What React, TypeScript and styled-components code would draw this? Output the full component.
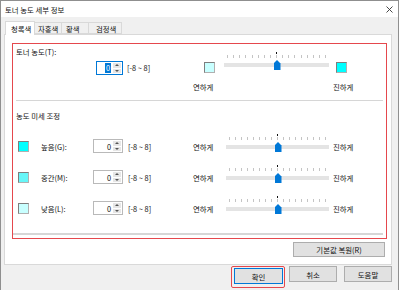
import React from "react";
import styled, { createGlobalStyle } from "styled-components";

const GlobalStyle = createGlobalStyle`
  html, body { margin: 0; padding: 0; background: #f0f0f0; }
  body {
    font-family: "Noto Sans CJK KR", "Noto Sans", sans-serif;
    font-size: 7.4px;
    color: #111;
  }
`;

const Window = styled.div`
  width: 399px;
  height: 290px;
  box-sizing: border-box;
  border: 1px solid #8f8f8f;
  border-bottom: none;
  background: #f0f0f0;
  display: flex;
  flex-direction: column;
  overflow: hidden;
`;

const TitleBar = styled.div`
  height: 16px;
  flex: none;
  background: #fff;
  display: flex;
  align-items: center;
  justify-content: space-between;
  padding: 0 5px 0 4px;
`;

const TabStrip = styled.div`
  height: 17px;
  flex: none;
  display: flex;
  align-items: flex-end;
  padding-left: 4px;
  position: relative;
  z-index: 1;
`;

const Tab = styled.div<{ $w: number; $active?: boolean; $pl: number }>`
  width: ${(p) => p.$w}px;
  height: ${(p) => (p.$active ? 14 : 12)}px;
  margin-bottom: ${(p) => (p.$active ? -1 : 0)}px;
  margin-left: -1px;
  box-sizing: border-box;
  background: ${(p) => (p.$active ? "#fff" : "#f0f0f0")};
  border: 1px solid #d9d9d9;
  border-bottom: ${(p) => (p.$active ? "none" : "1px solid #d9d9d9")};
  padding-left: ${(p) => p.$pl}px;
  display: flex;
  align-items: center;
  white-space: nowrap;
  &:first-child { margin-left: 0; }
`;

const Panel = styled.div`
  height: 231px;
  width: 388px;
  flex: none;
  margin-left: 3px;
  box-sizing: border-box;
  background: #fff;
  border: 1px solid #d9d9d9;
  padding: 8px 6px 0 7px;
  display: flex;
  flex-direction: column;
`;

const RedBox = styled.div`
  width: 375px;
  height: 196px;
  box-sizing: border-box;
  border: 1px solid #e5484d;
  display: flex;
  flex-direction: column;
`;

const TopSection = styled.div`
  padding: 2px 3px 0;
  display: flex;
  flex-direction: column;
`;

const SectionLabel = styled.div<{ $mt?: number }>`
  line-height: 11px;
  height: 11px;
  margin-top: ${(p) => p.$mt ?? 0}px;
  padding-left: ${(p) => (p.$mt ? 3 : 0)}px;
`;

const ControlRow = styled.div`
  display: flex;
  align-items: flex-start;
  margin-top: -6px;
  height: 24px;
`;

const Text = styled.div<{ $w?: number; $ml?: number; $mt?: number }>`
  width: ${(p) => (p.$w ? `${p.$w}px` : "auto")};
  margin-left: ${(p) => p.$ml ?? 0}px;
  margin-top: ${(p) => p.$mt ?? 0}px;
  line-height: 11px;
  flex: none;
  white-space: nowrap;
`;

const EndLabels = styled.div`
  display: flex;
  margin-top: 6px;
  height: 11px;
`;

const Divider = styled.div<{ $mt: number; $ml: number; $h?: number }>`
  height: ${(p) => p.$h ?? 1}px;
  margin: ${(p) => p.$mt}px 3px 0 ${(p) => p.$ml}px;
  background: #d6d6d6;
`;

const Rows = styled.div`
  display: flex;
  flex-direction: column;
  gap: 11px;
  margin-top: 15px;
`;

const Row = styled.div`
  display: flex;
  align-items: center;
  height: 20px;
`;

const Swatch = styled.div<{ $color: string; $ml?: number; $mt?: number }>`
  width: 11px;
  height: 11px;
  flex: none;
  box-sizing: border-box;
  margin-left: ${(p) => p.$ml ?? 0}px;
  margin-top: ${(p) => p.$mt ?? 0}px;
  background: ${(p) => p.$color};
  border: 1px solid #7e7e7e;
  border-right-color: #b0b0b0;
  border-bottom-color: #b0b0b0;
`;

const Spinner = styled.div<{ $w: number; $ml?: number; $mt?: number; $focused?: boolean }>`
  width: ${(p) => p.$w}px;
  height: 14px;
  flex: none;
  box-sizing: border-box;
  margin-left: ${(p) => p.$ml ?? 0}px;
  margin-top: ${(p) => p.$mt ?? 0}px;
  border: 1px solid ${(p) => (p.$focused ? "#0078d7" : "#b9b9b9")};
  background: #fff;
  display: flex;
`;

const SpinValue = styled.div`
  flex: 1;
  display: flex;
  align-items: center;
  justify-content: flex-end;
  padding-right: 2px;
`;

const Selected = styled.span`
  background: #0078d7;
  color: #fff;
  padding: 0 1px;
  line-height: 10px;
`;

const SpinButtons = styled.div`
  width: 8px;
  display: flex;
  flex-direction: column;
  gap: 1px;
  padding: 1px 1px 1px 0;
`;

const SpinButton = styled.div`
  flex: 1;
  background: #e6e6e6;
  display: flex;
  align-items: center;
  justify-content: center;
`;

const Arrow = styled.span<{ $down?: boolean }>`
  width: 0;
  height: 0;
  border-left: 2px solid transparent;
  border-right: 2px solid transparent;
  ${(p) => (p.$down ? "border-top: 2px solid #555;" : "border-bottom: 2px solid #555;")}
`;

const SliderBox = styled.div<{ $w: number; $ml?: number; $mt?: number }>`
  position: relative;
  width: ${(p) => p.$w}px;
  height: 20px;
  flex: none;
  align-self: flex-start;
  margin-left: ${(p) => p.$ml ?? 0}px;
  margin-top: ${(p) => p.$mt ?? 0}px;
  display: flex;
  flex-direction: column;
`;

const DotRow = styled.div`
  height: 2px;
  margin-top: 1px;
  display: flex;
  justify-content: center;
  & > span { width: 1px; height: 2px; background: #111; }
`;

const Ticks = styled.div`
  height: 3px;
  margin-top: 1px;
  padding: 0 3px;
  display: flex;
  justify-content: space-between;
  & > span { width: 1px; background: #c4c4c4; }
`;

const Track = styled.div`
  height: 4px;
  margin-top: 5px;
  background: #e4e4e4;
`;

const Thumb = styled.div`
  position: absolute;
  left: calc(50% - 3px);
  top: 9px;
  width: 7px;
  height: 10px;
  background: #0078d7;
  clip-path: polygon(50% 0, 100% 35%, 100% 100%, 0 100%, 0 35%);
`;

const RestoreRow = styled.div`
  display: flex;
  justify-content: flex-end;
  margin-top: 3px;
`;

const Button = styled.button<{ $w: number; $h?: number; $ml?: number; $primary?: boolean }>`
  width: ${(p) => p.$w}px;
  height: ${(p) => p.$h ?? 16}px;
  margin-left: ${(p) => p.$ml ?? 0}px;
  box-sizing: border-box;
  padding: 0;
  font: inherit;
  color: #111;
  background: #e1e1e1;
  border: 1px solid ${(p) => (p.$primary ? "#0078d7" : "#adadad")};
  display: flex;
  align-items: center;
  justify-content: center;
`;

const Footer = styled.div`
  height: 25px;
  flex: none;
  display: flex;
  align-items: flex-start;
  justify-content: flex-end;
  gap: 4px;
  padding: 1px 6px 0 0;
`;

const Highlight = styled.div`
  border: 1px solid #e5484d;
  border-radius: 2px;
  padding: 1px 1px 3px 2px;
`;

const Slider = ({ w, ml, mt }: { w: number; ml?: number; mt?: number }) => (
  <SliderBox $w={w} $ml={ml} $mt={mt}>
    <DotRow>
      <span />
    </DotRow>
    <Ticks>
      {Array.from({ length: 17 }).map((_, i) => (
        <span key={i} />
      ))}
    </Ticks>
    <Track />
    <Thumb />
  </SliderBox>
);

const SpinBox = ({ w, ml, mt, focused }: { w: number; ml?: number; mt?: number; focused?: boolean }) => (
  <Spinner $w={w} $ml={ml} $mt={mt} $focused={focused}>
    <SpinValue>{focused ? <Selected>0</Selected> : "0"}</SpinValue>
    <SpinButtons>
      <SpinButton>
        <Arrow />
      </SpinButton>
      <SpinButton>
        <Arrow $down />
      </SpinButton>
    </SpinButtons>
  </Spinner>
);

const rows = [
  { label: "높음(G):", color: "#00ffff" },
  { label: "중간(M):", color: "#66f6f8" },
  { label: "낮음(L):", color: "#c8ffff" },
];

export default function App() {
  return (
    <>
      <GlobalStyle />
      <Window>
        <TitleBar>
          <span>토너 농도 세부 정보</span>
          <svg width="7" height="7" viewBox="0 0 7 7">
            <path d="M0.5 0.5 L6.5 6.5 M6.5 0.5 L0.5 6.5" stroke="#333" strokeWidth="0.9" />
          </svg>
        </TitleBar>
        <TabStrip>
          <Tab $w={30} $pl={5} $active>
            청록색
          </Tab>
          <Tab $w={28} $pl={3}>
            자홍색
          </Tab>
          <Tab $w={28} $pl={4}>
            황색
          </Tab>
          <Tab $w={34} $pl={7}>
            검정색
          </Tab>
        </TabStrip>
        <Panel>
          <RedBox>
            <TopSection>
              <SectionLabel>토너 농도(T):</SectionLabel>
              <ControlRow>
                <SpinBox w={27} ml={80} mt={10} focused />
                <Text $w={77} $ml={4} $mt={11}>
                  [-8 ~ 8]
                </Text>
                <Swatch $color="#c8ffff" $mt={11} />
                <Slider w={105} ml={9} />
                <Swatch $color="#00ffff" $ml={7} $mt={11} />
              </ControlRow>
              <EndLabels>
                <Text $w={140} $ml={177}>
                  연하게
                </Text>
                <Text>진하게</Text>
              </EndLabels>
            </TopSection>
            <Divider $mt={8} $ml={3} />
            <SectionLabel $mt={9}>농도 미세 조정</SectionLabel>
            <Rows>
              {rows.map((r) => (
                <Row key={r.label}>
                  <Swatch $color={r.color} $ml={5} />
                  <Text $w={52} $ml={12}>
                    {r.label}
                  </Text>
                  <SpinBox w={30} />
                  <Text $w={65} $ml={5}>
                    [-8 ~ 8]
                  </Text>
                  <Text $w={33}>연하게</Text>
                  <Slider w={103} mt={-3} />
                  <Text $ml={4}>진하게</Text>
                </Row>
              ))}
            </Rows>
            <Divider $mt={15} $ml={0} $h={2} />
          </RedBox>
          <RestoreRow>
            <Button $w={92} $h={15}>
              기본값 복원(R)
            </Button>
          </RestoreRow>
        </Panel>
        <Footer>
          <Highlight>
            <Button $w={49} $primary>
              확인
            </Button>
          </Highlight>
          <Button $w={48}>취소</Button>
          <Button $w={48} $ml={3}>
            도움말
          </Button>
        </Footer>
      </Window>
    </>
  );
}
